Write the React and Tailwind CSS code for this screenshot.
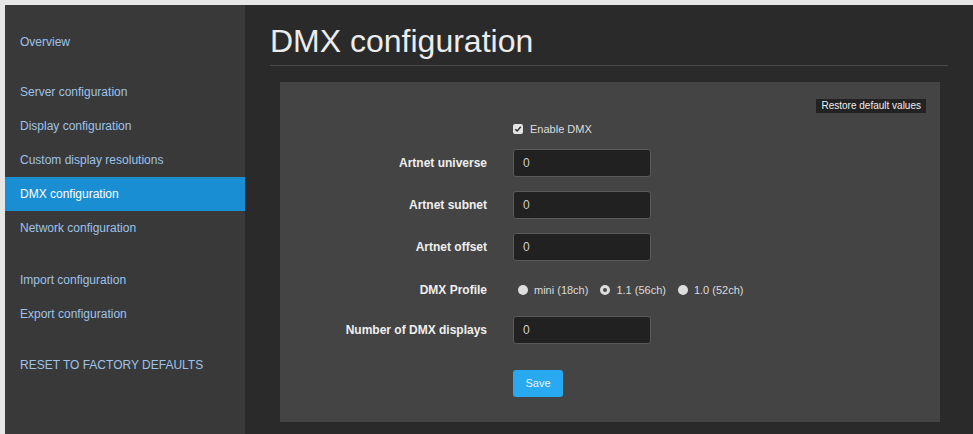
const font = { fontFamily: '"Liberation Sans", Arial, sans-serif' };

function SideLink({ label, active, className = "" }) {
  return (
    <div
      className={`h-[34px] flex items-center px-[15px] text-[12px] ${
        active ? "bg-[#1a8ed2] text-white" : "text-[#9ec3ea]"
      } ${className}`}
    >
      {label}
    </div>
  );
}

function Field({ label, className = "" }) {
  return (
    <div className={`flex items-center h-[28px] ${className}`}>
      <div className="w-[207px] text-right text-[12px] font-bold text-[#efefef]">{label}</div>
      <div className="ml-[26px] w-[138px] h-[28px] rounded-[3px] border border-[#5a5a5a] bg-[#212121] flex items-center px-[9px] text-[12px] text-[#cfcfcf]">
        0
      </div>
    </div>
  );
}

function Radio({ checked, label }) {
  return (
    <div className="flex items-center mr-[12px]">
      <span className="w-[10px] h-[10px] rounded-full bg-[#dedede] flex items-center justify-center">
        {checked && <span className="w-[4px] h-[4px] rounded-full bg-[#4a4a4a]" />}
      </span>
      <span className="ml-[6px] text-[11px] text-[#dcdcdc]">{label}</span>
    </div>
  );
}

export default function App() {
  return (
    <div className="w-full h-[434px] bg-[#e6e6e6] pt-[5px] pl-[5px] flex overflow-hidden" style={font}>
      <aside className="w-[240px] h-full bg-[#393939] pt-[20px] flex flex-col">
        <SideLink label="Overview" />
        <SideLink label="Server configuration" className="mt-[16px]" />
        <SideLink label="Display configuration" />
        <SideLink label="Custom display resolutions" />
        <SideLink label="DMX configuration" active />
        <SideLink label="Network configuration" />
        <SideLink label="Import configuration" className="mt-[18px]" />
        <SideLink label="Export configuration" />
        <SideLink label="RESET TO FACTORY DEFAULTS" className="mt-[17px]" />
      </aside>

      <main className="flex-1 h-full bg-[#2a2a2a] pl-[25px] pr-[25px]">
        <div className="pt-[18px] pb-[5px] border-b border-[#4a4a4a]">
          <h1 className="h-[37px] leading-[37px] text-[32px] text-[#ececec]">DMX configuration</h1>
        </div>

        <section className="mt-[16px] ml-[10px] mr-[8px] h-[340px] bg-[#444444] flex flex-col">
          <div className="flex justify-end pt-[17px] pr-[14px]">
            <button className="h-[14px] px-[5px] bg-[#222222] text-[10px] leading-[14px] text-[#eeeeee]">
              Restore default values
            </button>
          </div>

          <div className="flex items-center h-[16px] mt-[8px] pl-[233px]">
            <span className="w-[10px] h-[10px] rounded-[2px] bg-[#e4e4e4] flex items-center justify-center">
              <svg width="8" height="8" viewBox="0 0 8 8">
                <path d="M1.2 4.2 L3.2 6 L6.8 1.8" fill="none" stroke="#333" strokeWidth="1.5" />
              </svg>
            </span>
            <span className="ml-[7px] text-[11px] text-[#dddddd]">Enable DMX</span>
          </div>

          <Field label="Artnet universe" className="mt-[12px]" />
          <Field label="Artnet subnet" className="mt-[14px]" />
          <Field label="Artnet offset" className="mt-[14px]" />

          <div className="flex items-center h-[28px] mt-[15px]">
            <div className="w-[207px] text-right text-[12px] font-bold text-[#efefef]">DMX Profile</div>
            <div className="ml-[31px] flex items-center">
              <Radio label="mini (18ch)" />
              <Radio label="1.1 (56ch)" checked />
              <Radio label="1.0 (52ch)" />
            </div>
          </div>

          <Field label="Number of DMX displays" className="mt-[12px]" />

          <div className="mt-[26px] pl-[233px]">
            <button className="w-[50px] h-[27px] rounded-[3px] bg-[#29a9f0] text-[11px] text-[#e8f6ff]">
              Save
            </button>
          </div>
        </section>
      </main>
    </div>
  );
}
